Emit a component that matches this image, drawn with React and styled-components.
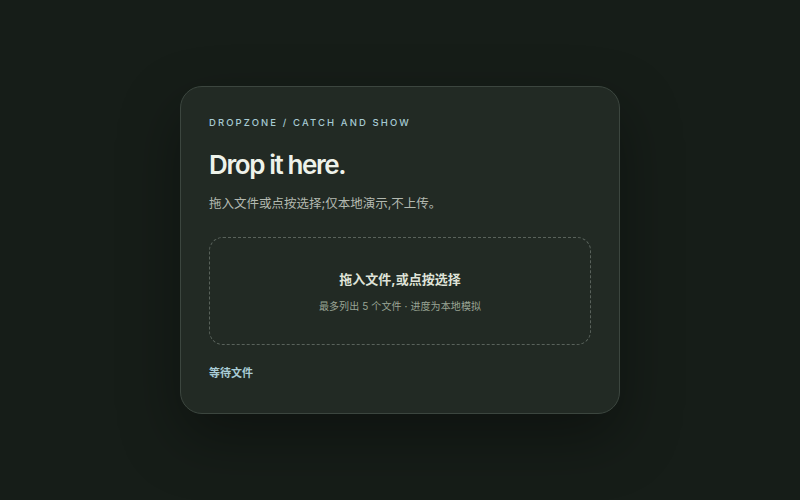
import styled, { createGlobalStyle } from "styled-components";

const GlobalStyle = createGlobalStyle`
  html, body {
    margin: 0;
    padding: 0;
    background: #161d18;
  }
  body {
    font-family: Inter, "Noto Sans CJK SC", sans-serif;
  }
`;

const Page = styled.div`
  width: 800px;
  height: 500px;
  display: flex;
  align-items: center;
  justify-content: center;
  background: #161d18;
`;

const Card = styled.section`
  box-sizing: border-box;
  width: 440px;
  height: 328px;
  padding: 30px 28px 28px;
  border-radius: 22px;
  background: #222a24;
  border: 1px solid #3c463f;
  box-shadow: 0 24px 60px rgba(0, 0, 0, 0.35);
  display: flex;
  flex-direction: column;
`;

const Eyebrow = styled.div`
  font-size: 9.5px;
  letter-spacing: 2.1px;
  color: #a6cbd3;
  font-weight: 500;
  line-height: 12px;
`;

const Title = styled.h1`
  margin: 20px 0 0;
  font-size: 26px;
  line-height: 32px;
  font-weight: 600;
  letter-spacing: -1.4px;
  color: #eef2ea;
`;

const Lead = styled.p`
  margin: 14px 0 0;
  font-size: 12.5px;
  line-height: 18px;
  color: #b3b9b0;
`;

const Zone = styled.div`
  box-sizing: border-box;
  margin-top: 24px;
  height: 108px;
  border: 1px dashed #59625b;
  border-radius: 14px;
  display: flex;
  flex-direction: column;
  align-items: center;
  justify-content: center;
  gap: 11px;
  padding-top: 1px;
`;

const ZoneTitle = styled.div`
  font-size: 13px;
  font-weight: 700;
  color: #dfe3d8;
  line-height: 18px;
`;

const ZoneHint = styled.div`
  font-size: 10px;
  color: #9aa595;
  line-height: 14px;
  letter-spacing: 0.1px;
`;

const Status = styled.div`
  margin-top: 20px;
  font-size: 11px;
  font-weight: 700;
  color: #a9cdd6;
  line-height: 16px;
`;

export default function App() {
  return (
    <>
      <GlobalStyle />
      <Page>
        <Card>
          <Eyebrow>DROPZONE / CATCH AND SHOW</Eyebrow>
          <Title>Drop it here.</Title>
          <Lead>拖入文件或点按选择;仅本地演示,不上传。</Lead>
          <Zone>
            <ZoneTitle>拖入文件,或点按选择</ZoneTitle>
            <ZoneHint>最多列出 5 个文件 · 进度为本地模拟</ZoneHint>
          </Zone>
          <Status>等待文件</Status>
        </Card>
      </Page>
    </>
  );
}
